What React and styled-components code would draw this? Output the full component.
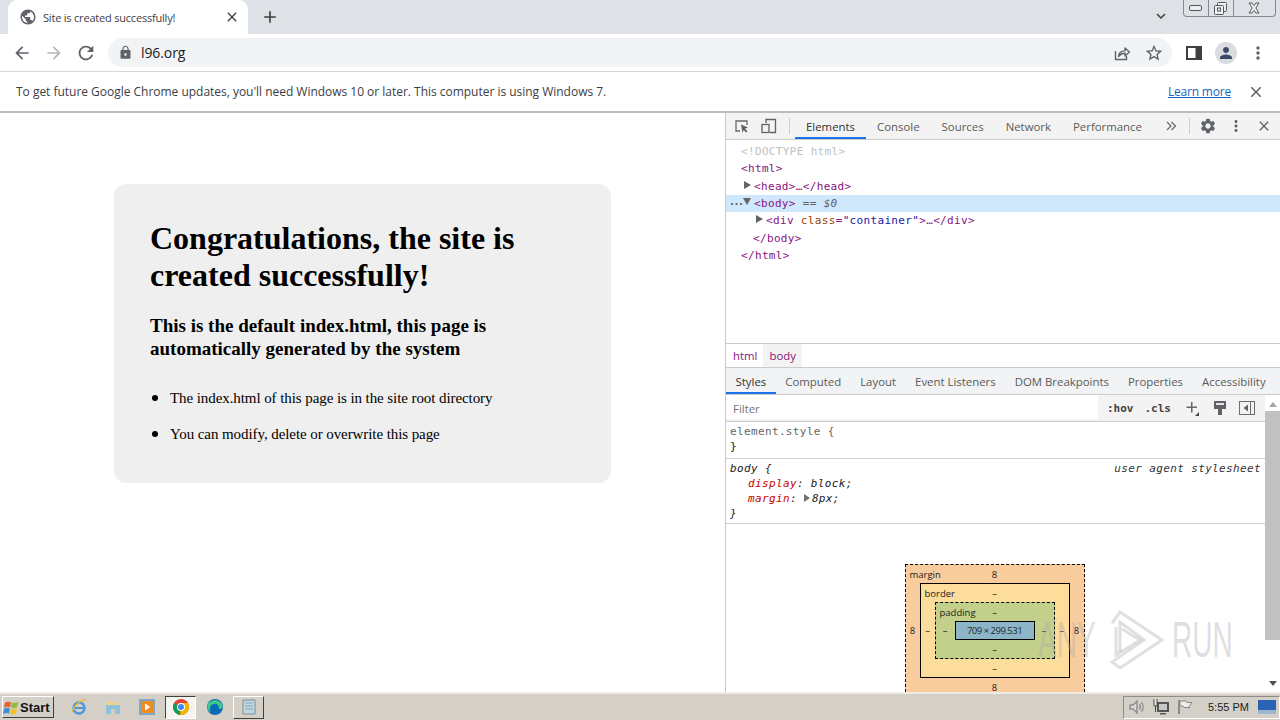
import React from "react";
import styled, { createGlobalStyle } from "styled-components";
import {
  MdPublic, MdClose, MdAdd, MdExpandMore, MdArrowBack, MdArrowForward, MdRefresh,
  MdLock, MdStarBorder, MdPerson, MdMoreVert, MdSettings,
} from "react-icons/md";

const Global = createGlobalStyle`
  html, body { margin: 0; padding: 0; overflow: hidden; background: #fff; }
  * { box-sizing: border-box; }
  ul { margin: 0; }
`;

const UI = `"Open Sans", "Noto Sans", sans-serif`;
const MONO = `"DejaVu Sans Mono", "Liberation Mono", monospace`;

const Window = styled.div`
  position: relative;
  width: 1280px;
  height: 720px;
  display: flex;
  flex-direction: column;
  overflow: hidden;
  font-family: ${UI};
`;

/* ---- chrome tab strip ---- */
const TabStrip = styled.div`
  height: 34px;
  flex: none;
  display: flex;
  align-items: flex-start;
  background: #dee1e6;
  padding-left: 8px;
  color: #45494e;
`;
const Tab = styled.div`
  width: 240px;
  height: 34px;
  background: #fff;
  border-radius: 9px 9px 0 0;
  display: flex;
  align-items: center;
  padding: 0 8px 0 11px;
  gap: 6px;
  font-size: 11px;
  letter-spacing: -0.2px;
  color: #3c4043;
  svg { flex: none; }
`;
const TabTitle = styled.span`
  flex: 1;
  white-space: nowrap;
`;
const NewTab = styled.div`
  width: 20px;
  height: 34px;
  margin-left: 12px;
  display: flex;
  align-items: center;
  justify-content: center;
  color: #3c4043;
`;
const StripSpacer = styled.div`
  flex: 1;
`;
const TabSearch = styled.div`
  width: 18px;
  height: 18px;
  margin: 7px 13px 0 0;
  color: #3c4043;
  display: flex;
`;
const WinControls = styled.div`
  width: 93px;
  height: 17px;
  margin-right: 4px;
  display: flex;
  border: 1px solid #85898f;
  border-top: none;
  border-radius: 0 0 4px 4px;
`;
const WinButton = styled.div`
  flex: ${p => p.$grow || 1};
  display: flex;
  align-items: center;
  justify-content: center;
  & + & { border-left: 1px solid #85898f; }
`;

/* ---- address bar ---- */
const Toolbar = styled.div`
  height: 38px;
  flex: none;
  background: #fff;
  border-bottom: 1px solid #d5d6d8;
  display: flex;
  align-items: center;
  padding: 0 10px 0 10px;
  color: #5f6368;
`;
const NavButton = styled.div`
  width: 24px;
  height: 24px;
  margin-right: ${p => p.$gap ?? 8}px;
  display: flex;
  align-items: center;
  justify-content: center;
  color: ${p => p.$off ? "#b4b6b9" : "#5f6368"};
`;
const Omnibox = styled.div`
  width: 1064px;
  height: 29px;
  margin-left: 2px;
  margin-right: 10px;
  border-radius: 15px;
  background: #f1f3f4;
  display: flex;
  align-items: center;
  padding: 0 6px 0 10px;
`;
const Url = styled.div`
  flex: 1;
  margin-left: 8px;
  font-size: 14px;
  color: #202124;
  letter-spacing: -0.1px;
`;
const Avatar = styled.div`
  width: 22px;
  height: 22px;
  border-radius: 50%;
  background: #dadce0;
  color: #3c4a66;
  display: flex;
  align-items: center;
  justify-content: center;
`;

/* ---- update infobar ---- */
const Infobar = styled.div`
  height: 41px;
  flex: none;
  background: #fff;
  border-bottom: 2px solid #bdbdbd;
  display: flex;
  align-items: center;
  padding: 0 15px 0 16px;
  font-size: 12px;
  letter-spacing: -0.02px;
  color: #3c4043;
`;
const InfoText = styled.div`
  flex: 1;
`;
const LearnMore = styled.a`
  color: #1a65c0;
  text-decoration: underline;
  letter-spacing: -0.2px;
  margin-right: 16px;
`;

const Main = styled.div`
  flex: 1;
  min-height: 0;
  display: flex;
`;

/* ---- the page itself ---- */
const Page = styled.div`
  width: 726px;
  flex: none;
  border-right: 1px solid #c8c8c8;
  padding-top: 71px;
  font-family: "Liberation Serif", serif;
  color: #000;
`;
const Card = styled.div`
  width: 497px;
  height: 299px;
  margin: 0 auto 0 114px;
  background: #efefef;
  border-radius: 12px;
  padding: 36px;
`;
const Title = styled.h1`
  margin: 0 0 20px;
  font-size: 32px;
  line-height: 37px;
  font-weight: 700;
`;
const Subtitle = styled.h2`
  margin: 0 0 29px;
  font-size: 19px;
  line-height: 23px;
  font-weight: 700;
`;
const Points = styled.ul`
  list-style: none;
  padding-left: 20px;
  font-size: 15px;
  letter-spacing: -0.08px;
  line-height: 18px;
  li { position: relative; }
  li::before {
    content: "";
    position: absolute;
    left: -18px;
    top: 6px;
    width: 6px;
    height: 6px;
    border-radius: 50%;
    background: #000;
  }
  li + li { margin-top: 18px; }
`;

/* ---- devtools ---- */
const Devtools = styled.div`
  flex: 1;
  min-width: 0;
  display: flex;
  flex-direction: column;
  font-size: 11.4px;
  color: #5a5a5a;
`;
const DtBar = styled.div`
  height: 27px;
  flex: none;
  background: #f3f3f3;
  border-bottom: 1px solid #cbcbcb;
  display: flex;
  align-items: center;
  padding-right: 2px;
`;
const DtIcon = styled.div`
  width: ${p => p.$w || 28}px;
  height: 26px;
  flex: none;
  display: flex;
  align-items: center;
  justify-content: center;
  color: #5f6368;
`;
const DtSep = styled.div`
  width: 1px;
  height: 16px;
  flex: none;
  background: #cfcfcf;
  margin: 0 ${p => p.$r ?? 5}px 0 ${p => p.$l ?? 5}px;
`;
const DtTab = styled.div`
  height: 100%;
  padding: 0 ${p => p.$pad || 11}px;
  display: flex;
  align-items: center;
  white-space: nowrap;
  flex: none;
  color: ${p => p.$active ? "#333" : "#5a5a5a"};
  box-shadow: ${p => p.$active ? "inset 0 -2px 0 #1a73e8" : "none"};
`;
const DtSpacer = styled.div`
  flex: 1;
`;
const Tree = styled.div`
  height: 203px;
  flex: none;
  padding-top: 3px;
  font-family: ${MONO};
  font-size: 11px;
  letter-spacing: 0.34px;
  background: #fff;
`;
const TreeRow = styled.div`
  position: relative;
  height: 17.33px;
  line-height: 17px;
  padding-left: ${p => p.$indent}px;
  white-space: nowrap;
  color: #881280;
  background: ${p => p.$selected ? "#cfe8fc" : "transparent"};
`;
const Doctype = styled.span`
  color: #c0c0c0;
`;
const AttrName = styled.span`
  color: #994500;
`;
const AttrValue = styled.span`
  color: #1a1aa6;
`;
const Muted = styled.span`
  color: #5f6368;
`;
const Arrow = styled.span`
  position: absolute;
  top: 3px;
  left: ${p => p.$left}px;
  width: 0;
  height: 0;
  ${p => p.$open
    ? "border-left: 4px solid transparent; border-right: 4px solid transparent; border-top: 7px solid #646464;"
    : "border-top: 4px solid transparent; border-bottom: 4px solid transparent; border-left: 7px solid #646464;"}
`;
const Dots = styled.span`
  position: absolute;
  left: 3px;
  top: -2px;
  font-size: 10px;
  color: #555;
  font-weight: 700;
  letter-spacing: -1.5px;
`;
const Crumbs = styled.div`
  height: 25px;
  flex: none;
  border-top: 1px solid #cbcbcb;
  border-bottom: 1px solid #cbcbcb;
  background: #fff;
  display: flex;
  padding-left: 1px;
`;
const Crumb = styled.div`
  padding: 0 6px;
  display: flex;
  align-items: center;
  color: #881280;
  background: ${p => p.$on ? "#f3f3f3" : "transparent"};
`;
const StylesTabs = styled(DtBar)`
  background: #f1f3f5;
`;
const StylesBody = styled.div`
  flex: 1;
  min-height: 0;
  display: flex;
`;
const StylesMain = styled.div`
  flex: 1;
  min-width: 0;
  display: flex;
  flex-direction: column;
  overflow: hidden;
`;
const FilterBar = styled.div`
  height: 27px;
  flex: none;
  background: #f3f3f3;
  border-bottom: 1px solid #cbcbcb;
  display: flex;
  align-items: center;
`;
const FilterInput = styled.div`
  width: 372px;
  height: 24px;
  align-self: flex-start;
  background: #fff;
  padding: 2px 7px 0;
  display: flex;
  align-items: center;
  color: #757575;
`;
const FilterFlag = styled.span`
  font-family: ${MONO};
  font-size: 11px;
  font-weight: 700;
  color: #444;
  margin-left: ${p => p.$left || 0}px;
`;
const FilterIcons = styled.div`
  display: flex;
  margin-left: 7px;
`;
const Rule = styled.div`
  flex: none;
  padding: 2px 4px ${p => p.$bottom || 2}px;
  border-bottom: 1px solid #cfcfcf;
  font-family: ${MONO};
  font-size: 11px;
  line-height: 15px;
  color: #222;
  letter-spacing: 0.36px;
`;
const RuleHead = styled.div`
  display: flex;
  justify-content: space-between;
  font-style: ${p => p.$italic ? "italic" : "normal"};
  color: ${p => p.$dim ? "#666" : "#222"};
`;
const Origin = styled.span`
  color: #333;
`;
const Decl = styled.div`
  padding-left: 18px;
  font-style: italic;
`;
const Prop = styled.span`
  color: #c80000;
`;
const MiniArrow = styled.span`
  display: inline-block;
  border-top: 4px solid transparent;
  border-bottom: 4px solid transparent;
  border-left: 6px solid #727272;
  margin: 0 2px 0 0;
`;
const BoxArea = styled.div`
  flex: none;
  display: flex;
  justify-content: center;
  padding: 40px 2px 0 0;
`;
const BoxLayer = styled.div`
  position: relative;
  display: grid;
  grid-template-columns: ${p => `${p.$side}px ${p.$inner}px ${p.$side}px`};
  grid-template-rows: 18px auto 18px;
  flex: none;
  background: ${p => p.$bg};
  border: 1px ${p => p.$line} #000;
  font-size: 9.5px;
  color: #222;
  line-height: 18px;
  text-align: center;
`;
const BoxLabel = styled.span`
  position: absolute;
  left: 4px;
  top: 1px;
`;
const BoxValue = styled.span`
  display: flex;
  align-items: center;
  justify-content: center;
  padding-top: 1px;
`;
const BoxContent = styled.div`
  width: 80px;
  height: 19px;
  background: #8cb6c8;
  border: 1px solid #000;
  line-height: 18px;
  font-size: 9.5px;
  letter-spacing: -0.5px;
  text-align: center;
  color: #1c2a30;
`;
const Scrollbar = styled.div`
  width: 15px;
  flex: none;
  padding-top: 2px;
  background: #fff;
  display: flex;
  flex-direction: column;
  align-items: center;
`;
const ScrollArrow = styled.div`
  flex: none;
  width: 0;
  height: 0;
  margin: ${p => p.$up ? "5px 0 4px" : "0 0 6px"};
  border-left: 4px solid transparent;
  border-right: 4px solid transparent;
  ${p => p.$up ? "border-bottom: 5px solid #a6a6a6;" : "border-top: 5px solid #505050;"}
`;
const ScrollTrack = styled.div`
  flex: 1;
  width: 100%;
`;
const ScrollThumb = styled.div`
  width: 100%;
  height: 229px;
  background: #c1c1c1;
`;

/* watermark sits over the devtools pane */
const Watermark = styled.div`
  position: absolute;
  left: 1038px;
  top: 609px;
  display: flex;
  align-items: center;
  font-family: "Liberation Sans", sans-serif;
  font-size: 50px;
  line-height: 62px;
  color: rgba(170, 170, 170, 0.38);
  pointer-events: none;
`;
const WatermarkWord = styled.span`
  display: inline-block;
  width: ${p => p.$w}px;
  transform: scaleX(0.56);
  transform-origin: left center;
`;
const WatermarkLogo = styled.div`
  width: 57px;
  height: 62px;
  margin: 0 7px 0 12px;
`;

/* ---- windows taskbar ---- */
const Taskbar = styled.div`
  height: 28px;
  flex: none;
  background: #d4d0c8;
  border-top: 2px solid #efece6;
  display: flex;
  align-items: center;
  padding: 0 0 0 2px;
`;
const StartButton = styled.div`
  width: 52px;
  height: 22px;
  display: flex;
  align-items: center;
  font-family: "Liberation Sans", sans-serif;
  font-size: 13px;
  font-weight: 700;
  color: #111;
  border: 1px solid;
  border-color: #fff #404040 #404040 #fff;
  margin-right: 9px;
`;
const TaskIcon = styled.div`
  width: 31px;
  height: 23px;
  margin-right: ${p => p.$gap ?? 3}px;
  display: flex;
  align-items: center;
  justify-content: center;
  flex: none;
  ${p => p.$state === "down" && "background: #f4f3f0; border: 1px solid; border-color: #404040 #fff #fff #404040;"}
  ${p => p.$state === "up" && "border: 1px solid; border-color: #fff #404040 #404040 #fff;"}
`;
const Tray = styled.div`
  margin-left: auto;
  width: 157px;
  height: 23px;
  display: flex;
  align-items: center;
  padding-left: 4px;
  gap: 6px;
  border: 1px solid;
  border-color: #8e8c86 #fff #fff #8e8c86;
  font-family: "Liberation Sans", sans-serif;
  font-size: 11px;
  color: #222;
`;
const Clock = styled.span`
  margin: 0 3px 0 8px;
  white-space: nowrap;
`;

const SharePage = () => (
  <svg width="18" height="18" viewBox="0 0 18 18" fill="none" stroke="#5f6368" strokeWidth="1.4">
    <path d="M2.5 7v8.5h11V12" />
    <path d="M5.5 12.5c.4-3.6 3-5.6 6.5-5.6V4l4.5 4-4.500 4V9.300c-2.700 0-4.800.9-6.500 3.200z" strokeLinejoin="round" />
  </svg>
);

const SidePanel = () => (
  <svg width="16" height="14" viewBox="0 0 16 14">
    <path d="M1 1h14v12H1z" fill="#fff" stroke="#3c4043" strokeWidth="2" />
    <path d="M9.500 1H15v12H9.500z" fill="#3c4043" />
  </svg>
);

const InspectIcon = () => (
  <svg width="16" height="16" viewBox="0 0 16 16" fill="none">
    <path d="M6 13H2V3h11v4" stroke="#6a6a6a" strokeWidth="1.300" />
    <path d="M7 6.500l7 3-3 1.200 2.500 2.600-1.400 1.300-2.400-2.600L8.500 15z" fill="#5f6368" />
  </svg>
);

const DeviceIcon = () => (
  <svg width="16" height="16" viewBox="0 0 16 16" fill="none" stroke="#5f6368" strokeWidth="1.300">
    <path d="M5 5V1.500h9.500v13H9" />
    <rect x="1" y="6.500" width="7" height="8" />
  </svg>
);

const DoubleChevron = () => (
  <svg width="12" height="12" viewBox="0 0 12 12" fill="none" stroke="#666" strokeWidth="1.200">
    <path d="M2 2l4 4-4 4M6.500 2l4 4-4 4" />
  </svg>
);

const RulePlus = () => (
  <svg width="16" height="18" viewBox="0 0 16 18">
    <path d="M7 3h1.500v4.500H13V9H8.500v4.500H7V9H2.500V7.500H7z" fill="#666" />
    <path d="M15 13v4h-4z" fill="#444" />
  </svg>
);

const PaintIcon = () => (
  <svg width="14" height="16" viewBox="0 0 14 16">
    <path d="M1 1h12v8H9v6H5V9H1z" fill="#5f6368" />
    <path d="M3 3h8v2H3z" fill="#e6e6e6" />
  </svg>
);

const ToggleSidebar = () => (
  <svg width="16" height="14" viewBox="0 0 16 14">
    <rect x="0.500" y="0.500" width="15" height="13" fill="none" stroke="#6e6e6e" />
    <path d="M11 .5h1v13h-1z" fill="#6e6e6e" />
    <path d="M9 3.500v7L4.500 7z" fill="#5f6368" />
  </svg>
);

const WinMin = () => (
  <svg width="13" height="8" viewBox="0 0 13 8">
    <rect x="0.500" y="1.500" width="12" height="5" rx="1.500" fill="#eceef1" stroke="#54575b" />
  </svg>
);
const WinRestore = () => (
  <svg width="13" height="13" viewBox="0 0 13 13" fill="#eceef1" stroke="#54575b">
    <rect x="3.500" y="0.500" width="9" height="9" rx="1" />
    <rect x="0.500" y="3.500" width="9" height="9" rx="1" />
    <rect x="3.500" y="6" width="3" height="3" />
  </svg>
);
const WinClose = () => (
  <svg width="14" height="12" viewBox="0 0 14 12">
    <path d="M2 1h3l2 2.500L9 1h3L8.800 6 12 11H9L7 8.500 5 11H2l3.200-5z" fill="#eceef1" stroke="#54575b" />
  </svg>
);

const StartFlag = () => (
  <svg width="17" height="17" viewBox="0 0 18 18">
    <path d="M2 4c2-1.500 4-1.500 6.500-.5L7.500 9C5.300 8 3.300 8 1 9.500z" fill="#e8602c" />
    <path d="M9.500 3.800c2 .8 4 .7 6.500-.8l-1 5.500c-2.300 1.500-4.500 1.500-6.500.8z" fill="#8cbc3f" />
    <path d="M1 10.500c2.300-1.500 4.200-1.500 6.300-.5l-1 5.500C4.300 14.500 2.300 14.500 0 16z" fill="#3c8fd8" />
    <path d="M8.300 10.300c2 .8 4.200.7 6.500-.8l-1 5.500c-2.300 1.500-4.600 1.500-6.500.7z" fill="#f6c327" />
  </svg>
);
const IeIcon = () => (
  <svg width="18" height="18" viewBox="0 0 18 18" fill="none">
    <circle cx="9" cy="10" r="5.500" stroke="#4a9bdc" strokeWidth="2.500" />
    <path d="M4 10h10" stroke="#4a9bdc" strokeWidth="2" />
    <path d="M2 14C4 8 9 3 16 1" stroke="#e9b93a" strokeWidth="1.500" />
  </svg>
);
const FolderIcon = () => (
  <svg width="18" height="18" viewBox="0 0 18 18">
    <path d="M3 3h5l1 2h6v3H3z" fill="#efd488" />
    <path d="M2 7h14v9H2z" fill="#8ec1da" />
    <path d="M7 11h4v5H7z" fill="#d4d0c8" />
  </svg>
);
const MediaIcon = () => (
  <svg width="18" height="18" viewBox="0 0 18 18">
    <rect x="1" y="1" width="16" height="16" fill="#7ea6c6" />
    <rect x="3" y="3" width="12" height="12" fill="#ef8a1d" />
    <path d="M7 5.500v7l5.500-3.500z" fill="#fff" />
  </svg>
);
const ChromeIcon = () => (
  <svg width="18" height="18" viewBox="0 0 18 18">
    <circle cx="9" cy="9" r="8" fill="#db4437" />
    <path d="M9 9L1.900 5.300A8 8 0 0 0 8 16.900z" fill="#0f9d58" />
    <path d="M9 5h7a8 8 0 0 1-8 11.900L9 9z" fill="#f4b400" />
    <circle cx="9" cy="9" r="4" fill="#fff" />
    <circle cx="9" cy="9" r="3" fill="#4285f4" />
  </svg>
);
const EdgeIcon = () => (
  <svg width="18" height="18" viewBox="0 0 18 18">
    <circle cx="9" cy="9" r="8" fill="#0c6bb5" />
    <path d="M1.500 7C3 2.500 13-1 16.500 7.500c.8 3-2 3.800-4 3.500C14 8 11 5 7.500 6 4 7 3 10 4.500 14 2 12.500 1 10 1.500 7z" fill="#3fc98b" />
  </svg>
);
const NoteIcon = () => (
  <svg width="18" height="18" viewBox="0 0 18 18">
    <path d="M3 2h12v14H3z" fill="#bfd8e4" stroke="#7c8c94" />
    <path d="M5 5h8M5 8h8M5 11h8" stroke="#8aa4b1" />
  </svg>
);
const SpeakerIcon = () => (
  <svg width="18" height="18" viewBox="0 0 18 18" fill="none" stroke="#8a8a8a" strokeWidth="1.300">
    <path d="M2 7v4h3l4 4V3L5 7z" fill="#d8d8d8" />
    <path d="M11.500 6.500a4 4 0 0 1 0 5M13.500 4.500a7 7 0 0 1 0 9" />
  </svg>
);
const NetIcon = () => (
  <svg width="18" height="18" viewBox="0 0 18 18">
    <rect x="5" y="4" width="12" height="10" fill="#555" />
    <rect x="7" y="6" width="8" height="6" fill="#c8c8c8" />
    <path d="M2 1v7h3V1M3.500 8v6" stroke="#444" fill="#f0f0f0" />
    <rect x="8" y="15" width="6" height="1.500" fill="#555" />
  </svg>
);
const FlagIcon = () => (
  <svg width="18" height="18" viewBox="0 0 18 18">
    <path d="M3 2v14" stroke="#666" strokeWidth="1.300" />
    <path d="M4 3h6l1 1.500h5l-3 4 1 1H8L7 8H4z" fill="#eee" stroke="#888" />
  </svg>
);
const DesktopIcon = () => (
  <svg width="18" height="14" viewBox="0 0 18 14">
    <rect width="18" height="14" fill="#2a62b4" />
    <rect y="10" width="18" height="4" fill="#9fb4cf" />
  </svg>
);
const RunLogo = () => (
  <svg width="57" height="62" viewBox="0 0 57 62" fill="none" stroke="rgba(170,170,170,0.36)" strokeWidth="3">
    <path d="M4 14L12 3l42 28-42 28-8-6 32-22L12 13v30" />
    <path d="M8 18v28l24-15L14 20" />
  </svg>
);

const ELEMENT_TABS = ["Console", "Sources", "Network", "Performance"];
const STYLE_TABS = ["Computed", "Layout", "Event Listeners", "DOM Breakpoints", "Properties", "Accessibility"];

export default function App() {
  return (
    <Window>
      <Global />
      <TabStrip>
        <Tab>
          <MdPublic size={18} color="#5f6368" />
          <TabTitle>Site is created successfully!</TabTitle>
          <MdClose size={16} color="#3c4043" />
        </Tab>
        <NewTab><MdAdd size={20} /></NewTab>
        <StripSpacer />
        <TabSearch><MdExpandMore size={18} /></TabSearch>
        <WinControls>
          <WinButton $grow={25}><WinMin /></WinButton>
          <WinButton $grow={25}><WinRestore /></WinButton>
          <WinButton $grow={43}><WinClose /></WinButton>
        </WinControls>
      </TabStrip>

      <Toolbar>
        <NavButton><MdArrowBack size={20} /></NavButton>
        <NavButton $off><MdArrowForward size={20} /></NavButton>
        <NavButton><MdRefresh size={22} /></NavButton>
        <Omnibox>
          <MdLock size={15} color="#5f6368" />
          <Url>l96.org</Url>
          <NavButton><SharePage /></NavButton>
          <NavButton $gap={0}><MdStarBorder size={20} /></NavButton>
        </Omnibox>
        <NavButton><SidePanel /></NavButton>
        <NavButton><Avatar><MdPerson size={18} /></Avatar></NavButton>
        <NavButton $gap={0}><MdMoreVert size={20} /></NavButton>
      </Toolbar>

      <Infobar>
        <InfoText>To get future Google Chrome updates, you'll need Windows 10 or later. This computer is using Windows 7.</InfoText>
        <LearnMore>Learn more</LearnMore>
        <MdClose size={18} color="#5f6368" />
      </Infobar>

      <Main>
        <Page>
          <Card>
            <Title>Congratulations, the site is created successfully!</Title>
            <Subtitle>This is the default index.html, this page is automatically generated by the system</Subtitle>
            <Points>
              <li>The index.html of this page is in the site root directory</li>
              <li>You can modify, delete or overwrite this page</li>
            </Points>
          </Card>
        </Page>

        <Devtools>
          <DtBar>
            <DtIcon $w={32}><InspectIcon /></DtIcon>
            <DtIcon $w={22}><DeviceIcon /></DtIcon>
            <DtSep $l={9} $r={5} />
            <DtTab $active>Elements</DtTab>
            {ELEMENT_TABS.map(t => <DtTab key={t}>{t}</DtTab>)}
            <DtSpacer />
            <DtIcon $w={24}><DoubleChevron /></DtIcon>
            <DtSep $l={6} $r={4} />
            <DtIcon $w={28}><MdSettings size={18} /></DtIcon>
            <DtIcon $w={28}><MdMoreVert size={18} /></DtIcon>
            <DtIcon $w={28}><MdClose size={16} /></DtIcon>
          </DtBar>

          <Tree>
            <TreeRow $indent={15}><Doctype>&lt;!DOCTYPE html&gt;</Doctype></TreeRow>
            <TreeRow $indent={15}>&lt;html&gt;</TreeRow>
            <TreeRow $indent={28}><Arrow $left={18} />&lt;head&gt;…&lt;/head&gt;</TreeRow>
            <TreeRow $indent={28} $selected>
              <Dots>...</Dots>
              <Arrow $left={17} $open />
              &lt;body&gt; <Muted>== <i>$0</i></Muted>
            </TreeRow>
            <TreeRow $indent={40}>
              <Arrow $left={30} />
              &lt;div <AttrName>class</AttrName>=<AttrValue>"container"</AttrValue>&gt;…&lt;/div&gt;
            </TreeRow>
            <TreeRow $indent={27}>&lt;/body&gt;</TreeRow>
            <TreeRow $indent={15}>&lt;/html&gt;</TreeRow>
          </Tree>

          <Crumbs>
            <Crumb>html</Crumb>
            <Crumb $on>body</Crumb>
          </Crumbs>

          <StylesTabs>
            <DtTab $active $pad={9.5}>Styles</DtTab>
            {STYLE_TABS.map(t => <DtTab key={t} $pad={9.5}>{t}</DtTab>)}
          </StylesTabs>

          <StylesBody>
            <StylesMain>
              <FilterBar>
                <FilterInput>Filter</FilterInput>
                <FilterFlag $left={9}>:hov</FilterFlag>
                <FilterFlag $left={11}>.cls</FilterFlag>
                <FilterIcons>
                  <DtIcon $w={28}><RulePlus /></DtIcon>
                  <DtIcon $w={28}><PaintIcon /></DtIcon>
                  <DtIcon $w={26}><ToggleSidebar /></DtIcon>
                </FilterIcons>
              </FilterBar>
              <Rule $bottom={4}>
                <RuleHead $dim><span>element.style {"{"}</span></RuleHead>
                <div>{"}"}</div>
              </Rule>
              <Rule>
                <RuleHead $italic><span>body {"{"}</span><Origin>user agent stylesheet</Origin></RuleHead>
                <Decl><Prop>display</Prop>: block;</Decl>
                <Decl><Prop>margin</Prop>: <MiniArrow />8px;</Decl>
                <div><i>{"}"}</i></div>
              </Rule>
              <BoxArea>
                <BoxLayer $bg="#f9cc9d" $line="dashed" $side={14} $inner={150}>
                  <BoxLabel>margin</BoxLabel>
                  <span />
                  <BoxValue>8</BoxValue>
                  <span />
                  <BoxValue>8</BoxValue>
                  <BoxLayer $bg="#fddd9b" $line="solid" $side={14} $inner={120}>
                    <BoxLabel>border</BoxLabel>
                    <span />
                    <BoxValue>–</BoxValue>
                    <span />
                    <BoxValue>–</BoxValue>
                    <BoxLayer $bg="#c3d08b" $line="dashed" $side={19} $inner={80}>
                      <BoxLabel>padding</BoxLabel>
                      <span />
                      <BoxValue>–</BoxValue>
                      <span />
                      <BoxValue>–</BoxValue>
                      <BoxContent>709 × 299.531</BoxContent>
                      <BoxValue>–</BoxValue>
                      <span />
                      <BoxValue>–</BoxValue>
                      <span />
                    </BoxLayer>
                    <BoxValue>–</BoxValue>
                    <span />
                    <BoxValue>–</BoxValue>
                    <span />
                  </BoxLayer>
                  <BoxValue>8</BoxValue>
                  <span />
                  <BoxValue>8</BoxValue>
                  <span />
                </BoxLayer>
              </BoxArea>
            </StylesMain>
            <Scrollbar>
              <ScrollArrow $up />
              <ScrollThumb />
              <ScrollTrack />
              <ScrollArrow />
            </Scrollbar>
          </StylesBody>
        </Devtools>
      </Main>

      <Taskbar>
        <StartButton><StartFlag />Start</StartButton>
        <TaskIcon><IeIcon /></TaskIcon>
        <TaskIcon><FolderIcon /></TaskIcon>
        <TaskIcon><MediaIcon /></TaskIcon>
        <TaskIcon $state="down"><ChromeIcon /></TaskIcon>
        <TaskIcon><EdgeIcon /></TaskIcon>
        <TaskIcon $state="up"><NoteIcon /></TaskIcon>
        <Tray>
          <SpeakerIcon />
          <NetIcon />
          <FlagIcon />
          <Clock>5:55 PM</Clock>
          <DesktopIcon />
        </Tray>
      </Taskbar>

      <Watermark>
        <WatermarkWord $w={58}>ANY</WatermarkWord>
        <WatermarkLogo><RunLogo /></WatermarkLogo>
        <WatermarkWord $w={60}>RUN</WatermarkWord>
      </Watermark>
    </Window>
  );
}
